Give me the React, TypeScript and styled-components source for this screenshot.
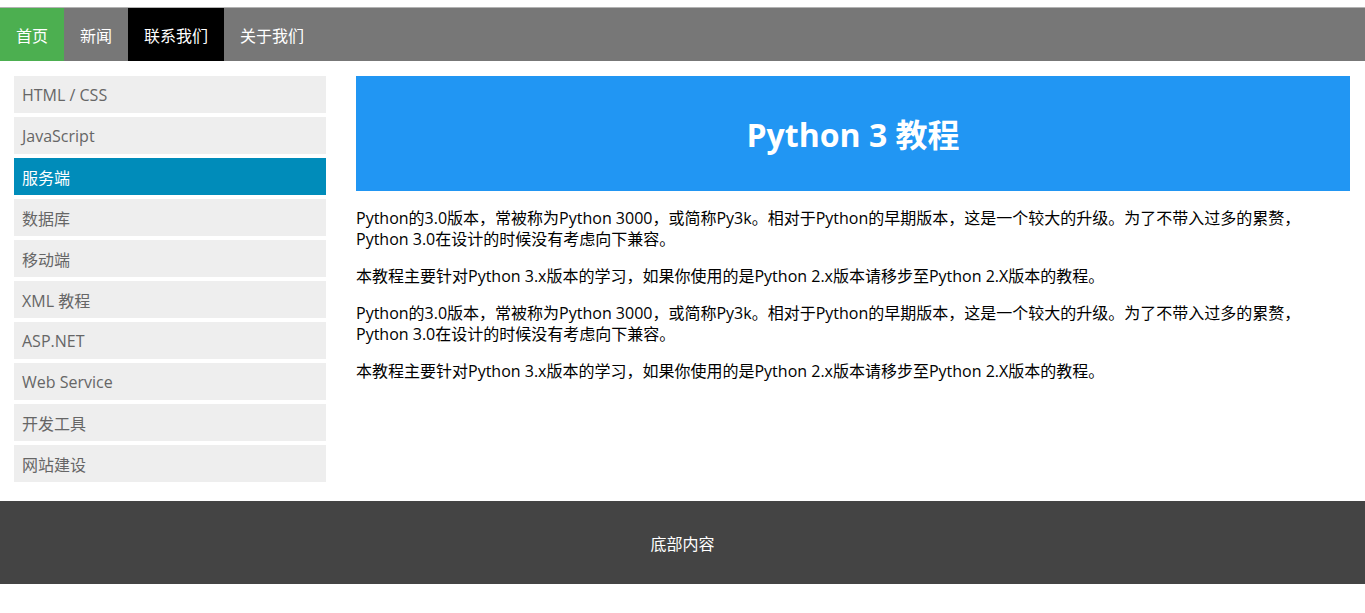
import React from "react";
import styled, { createGlobalStyle } from "styled-components";

const Global = createGlobalStyle`
  html, body { margin: 0; padding: 0; background: #fff; }
  body { font-family: "Open Sans", "Noto Sans CJK SC", sans-serif; font-size: 16px; }
  * { box-sizing: border-box; }
`;

const Page = styled.div`
  padding-top: 7px;
`;

const Nav = styled.ul`
  list-style: none;
  margin: 0;
  padding: 0;
  display: flex;
  background: #777;
  border-top: 1px solid #b3b3b3;
`;

const NavItem = styled.li<{ $bg?: string }>`
  height: 53px;
  padding: 0 16px;
  display: flex;
  align-items: center;
  color: #fff;
  font-size: 16px;
  background: ${(p) => p.$bg || "transparent"};
`;

const Row = styled.div`
  display: flex;
  gap: 30px;
  padding: 15px 15px 19px 14px;
  align-items: flex-start;
`;

const Side = styled.ul`
  list-style: none;
  margin: 0;
  padding: 0;
  width: 312px;
  flex: none;
  display: flex;
  flex-direction: column;
  gap: 4px;
`;

const SideItem = styled.li<{ $active?: boolean }>`
  height: 37px;
  padding: 0 8px;
  display: flex;
  align-items: center;
  font-size: 16px;
  color: ${(p) => (p.$active ? "#fff" : "#666")};
  background: ${(p) => (p.$active ? "#008CBA" : "#eee")};
`;

const Main = styled.div`
  flex: 1;
  min-width: 0;
`;

const Header = styled.div`
  height: 115px;
  background: #2196f3;
  display: flex;
  align-items: center;
  justify-content: center;
`;

const Title = styled.h1`
  margin: 0;
  color: #fff;
  font-size: 32px;
  font-weight: 700;
  line-height: 40px;
  padding-top: 2px;
`;

const Para = styled.p`
  margin: 16px 0;
  font-size: 16px;
  line-height: 21px;
  color: #000;
  &:first-of-type {
    margin-top: 17px;
  }
`;

const Footer = styled.div`
  height: 83px;
  background: #444;
  color: #fff;
  font-size: 16px;
  display: flex;
  align-items: center;
  justify-content: center;
`;

const sideItems = [
  "HTML / CSS",
  "JavaScript",
  "服务端",
  "数据库",
  "移动端",
  "XML 教程",
  "ASP.NET",
  "Web Service",
  "开发工具",
  "网站建设",
];

const p1 =
  "Python的3.0版本，常被称为Python 3000，或简称Py3k。相对于Python的早期版本，这是一个较大的升级。为了不带入过多的累赘，Python 3.0在设计的时候没有考虑向下兼容。";
const p2 =
  "本教程主要针对Python 3.x版本的学习，如果你使用的是Python 2.x版本请移步至Python 2.X版本的教程。";

export default function App() {
  return (
    <Page>
      <Global />
      <Nav>
        <NavItem $bg="#4CAF50">首页</NavItem>
        <NavItem>新闻</NavItem>
        <NavItem $bg="#000">联系我们</NavItem>
        <NavItem>关于我们</NavItem>
      </Nav>
      <Row>
        <Side>
          {sideItems.map((s) => (
            <SideItem key={s} $active={s === "服务端"}>
              {s}
            </SideItem>
          ))}
        </Side>
        <Main>
          <Header>
            <Title>Python 3 教程</Title>
          </Header>
          <Para>{p1}</Para>
          <Para>{p2}</Para>
          <Para>{p1}</Para>
          <Para>{p2}</Para>
        </Main>
      </Row>
      <Footer>底部内容</Footer>
    </Page>
  );
}
